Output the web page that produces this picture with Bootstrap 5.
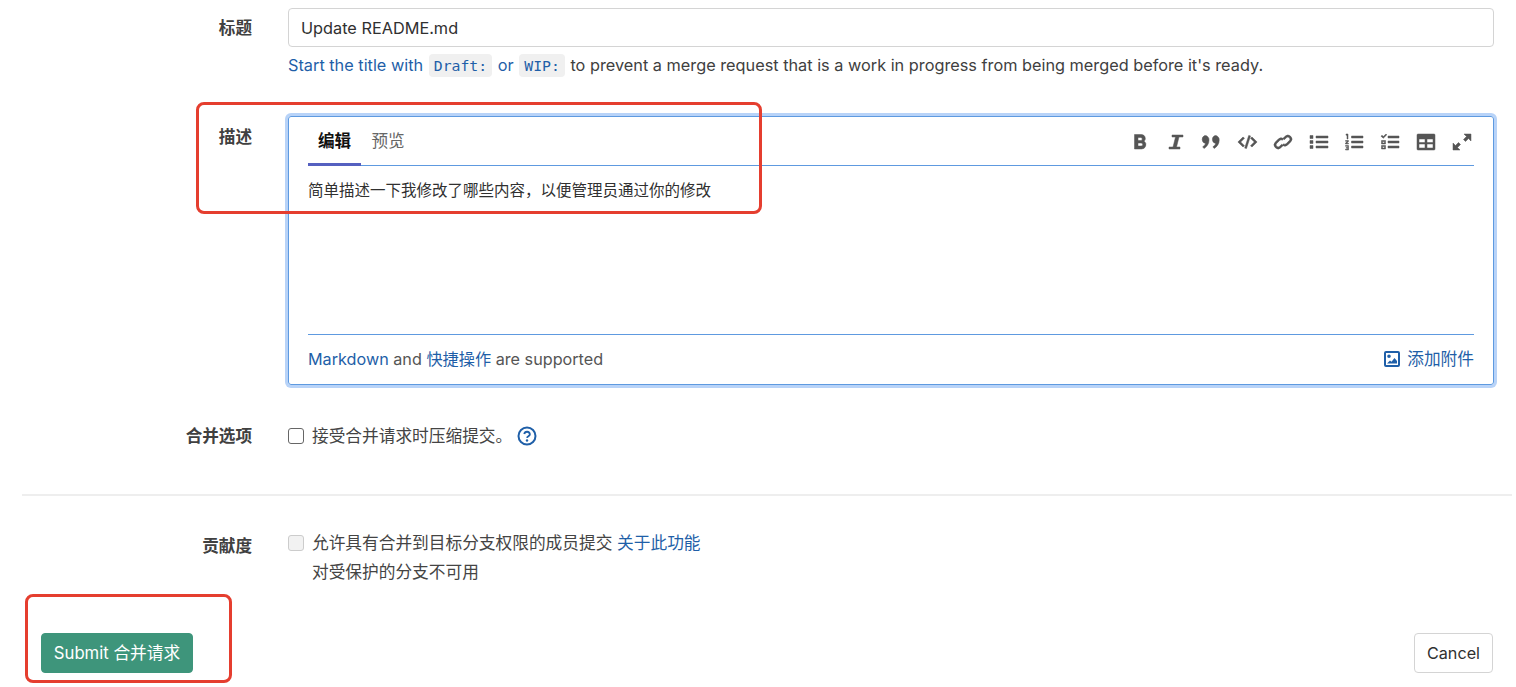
<!DOCTYPE html>
<html lang="zh">
<head>
<meta charset="utf-8">
<title>Merge request</title>
<link href="https://cdn.jsdelivr.net/npm/bootstrap@5.3.0/dist/css/bootstrap.min.css" rel="stylesheet">
<style>
html,body{height:687px;overflow:hidden}
body{background:#fff;color:#303030;font-family:Inter,"Noto Sans CJK SC",sans-serif;font-size:16.7px;position:relative}
.pg{padding:8px 4px 0 22px;height:687px;display:flex;flex-direction:column}
.frow{display:flex}
.flabel{width:230px;flex:none;text-align:right;font-weight:700;color:#404040;font-size:16.6px;line-height:24px}
.fbody{margin-left:36px;width:1206px;flex:none}
.lbl-title{margin-top:8px}
.title-in.form-control{height:39px;border:1px solid #d4d4d4;border-radius:4px;padding:0 12px;font-size:16.3px;color:#303030;font-family:inherit;box-shadow:none;line-height:37px}
.hint{margin-top:8px;line-height:20px;color:#404040;font-size:16.3px;white-space:nowrap}
.hint-link,.blue{color:#1f5fa8;text-decoration:none}
.hint code{font-family:"DejaVu Sans Mono",monospace;font-size:14.8px;color:#1f5fa8;background:#f0f0f0;border-radius:4px;padding:3px 5px;margin:0 1px}
.row-desc{margin-top:40px}
.lbl-desc{margin-top:9px}
.editor{height:269px;border:1px solid #5e9ae0;border-radius:3px;box-shadow:0 0 0 3px #b8d3f8;padding:0 19px;display:flex;flex-direction:column}
.edhead{height:49px;border-bottom:1px solid #5e9ae0;display:flex;justify-content:space-between;flex:none}
.edtab{width:53px;text-align:center;padding-top:12px;line-height:24px;height:49px;font-size:16.6px;color:#666;white-space:nowrap}
.edtab.on{font-weight:700;color:#111;border-bottom:3px solid #5560c0}
.edtab-next{margin-left:10px;width:34px}
.edtools{display:flex;gap:12px;padding:15px 0 0 0}
.edtools svg{width:24px;height:20px;fill:#555;stroke:#555;stroke-width:.5;display:block}
.edtext{flex:1;border-bottom:1px solid #5e9ae0;font-size:15.5px;color:#303030;padding-top:14px;line-height:22px}
.edfoot{height:49px;display:flex;justify-content:space-between;align-items:center;color:#555;font-size:16.2px;flex:none}
.attach{display:flex;align-items:center;gap:7px;font-size:16.7px}
.opt{line-height:24px;font-size:16.7px;color:#444}
.opt .form-check-input{width:16px;height:16px;margin:0 8px 0 0;border:1px solid #666;border-radius:3px;flex:none}
.opt .form-check-input:disabled{border-color:#ccc;background:#f2f2f2;opacity:1}
.row-merge{margin-top:39px}
.qmark{margin-left:5px}
.rule{margin:46px 0 0 0;border:0;border-top:2px solid #eeeeee;opacity:1}
.row-contrib{margin-top:35px}
.lbl-contrib{margin-top:3px}
.second{margin-left:24px;margin-top:5px}
.acts{display:flex;justify-content:space-between;margin-top:49px;padding:0 19px}
.btn-sub.btn{background:#3e957b;border-color:#3e957b;color:#fff;height:40px;width:152px;padding:2px 0 0;font-size:16.7px;border-radius:4px}
.btn-can.btn{background:#fff;border:1px solid #d4d4d4;color:#303030;height:40px;width:79px;padding:0;font-size:16.2px;border-radius:4px}
.callout{position:absolute;border:3px solid #e53e2f;border-radius:8px;pointer-events:none}
.c1{left:196px;top:102px;width:566px;height:112px}
.c2{left:25px;top:594px;width:207px;height:89px}
</style>
</head>
<body>
<div class="pg">
  <div class="frow">
    <div class="flabel lbl-title">标题</div>
    <div class="fbody">
      <input class="form-control title-in" value="Update README.md" aria-label="标题">
      <div class="hint"><a class="hint-link" href="#">Start the title with <code>Draft:</code> or <code>WIP:</code></a> to prevent a merge request that is a work in progress from being merged before it's ready.</div>
    </div>
  </div>
  <div class="frow row-desc">
    <div class="flabel lbl-desc">描述</div>
    <div class="fbody">
      <div class="editor">
        <div class="edhead">
          <div class="d-flex"><div class="edtab on">编辑</div><div class="edtab edtab-next">预览</div></div>
          <div class="edtools">
            <svg viewBox="0 0 24 20"><path d="M8.500 2.500h6.500a4 4 0 0 1 3.200 6.800A4.300 4.300 0 0 1 15.500 17H8.500zm3.500 3V8.500h2.800a1.500 1.500 0 0 0 0-3zm0 5.500v3h3.200a1.500 1.500 0 0 0 0-3z" fill-rule="evenodd"/></svg>
            <svg viewBox="0 0 24 20"><path d="M10 3h11v2h-4l-2.500 10H18v2H7v-2h4l2.500-10H10z"/></svg>
            <svg viewBox="0 0 24 20"><path d="M6.800 3.500a4.200 4.200 0 0 1 4.200 4.700c0 3.500-2 6.300-5 8.300l-1.300-1.700c1.500-1 2.400-2 2.800-3.300A4.200 4.200 0 0 1 6.800 3.500zm10.200 0a4.200 4.200 0 0 1 4.200 4.700c0 3.500-2 6.300-5 8.300l-1.300-1.700c1.500-1 2.400-2 2.800-3.300A4.200 4.200 0 0 1 17 3.500z"/></svg>
            <svg viewBox="0 0 24 20"><path d="M9 5l1.500 1.300L6.700 10l3.800 3.700L9 15l-5.100-5zM18 5l-1.500 1.300 3.800 3.700-3.800 3.700L18 15l5.100-5zM14.700 3.500l1.800.4-4 12.600-1.800-.4z"/></svg>
            <svg viewBox="0 0 24 20"><path d="M13 6.300l2-2a4 4 0 0 1 5.700 5.700l-3 3a4 4 0 0 1-5.400.2l1.300-1.400a2 2 0 0 0 2.700-.2l3-3a2 2 0 0 0-2.900-2.900l-2 2zM13 13.700l-2 2A4 4 0 0 1 5.300 10l3-3a4 4 0 0 1 5.400-.2l-1.300 1.400a2 2 0 0 0-2.700.2l-3 3a2 2 0 0 0 2.900 2.900l2-2z"/></svg>
            <svg viewBox="0 0 24 20"><path d="M4 3.500h3v3H4zM10 4h12v2H10zM4 8.500h3v3H4zM10 9h12v2H10zM4 13.500h3v3H4zM10 14h12v2H10z"/></svg>
            <svg viewBox="0 0 24 20"><path d="M4 2h2v5H5V3.200H4zM9.500 4H21v2H9.500zM9.500 9H21v2H9.500zM9.500 14H21v2H9.500zM3.500 8.500h3v1l-1.800 1.700h1.800v.8h-3v-1l1.800-1.700H3.500zM3.500 13.500h3v4.500h-3v-.8h2.200v-1H4.200v-.8h1.500v-1.100H3.500z"/></svg>
            <svg viewBox="0 0 24 20"><path d="M3 4.200l1-1 1.300 1.300L8 2l.8.8-3.500 3.400zM10 4h11v2H10zM3.500 8.500h4v3.500h-4zm1 1v1.500h2V9.500zM10 9h11v2H10zM3.500 13.500h4V17h-4zm1 1V16h2v-1.500zM10 14h11v2H10z" fill-rule="evenodd"/></svg>
            <svg viewBox="0 0 24 20"><path d="M4 2h16a1 1 0 0 1 1 1v14a1 1 0 0 1-1 1H4a1 1 0 0 1-1-1V3a1 1 0 0 1 1-1zm1 5v3.500h6V7zm8 0v3.500h6V7zM5 12v4h6v-4zm8 0v4h6v-4z" fill-rule="evenodd"/></svg>
            <svg viewBox="0 0 24 20"><path d="M14 2h7v7l-2.500-2.500-3 3-2-2 3-3zM3 18v-7l2.500 2.500 3-3 2 2-3 3L10 18z"/></svg>
          </div>
        </div>
        <div class="edtext">简单描述一下我修改了哪些内容，以便管理员通过你的修改</div>
        <div class="edfoot">
          <div><a class="blue" href="#">Markdown</a> and <a class="blue" href="#">快捷操作</a> are supported</div>
          <a class="blue attach" href="#"><svg width="16" height="16" viewBox="0 0 16 16"><path fill="#1f5fa8" fill-rule="evenodd" d="M2 0h12a2 2 0 0 1 2 2v12a2 2 0 0 1-2 2H2a2 2 0 0 1-2-2V2a2 2 0 0 1 2-2zm0 2v12h12V2zm3 1.500a1.800 1.800 0 1 1 0 3.600 1.800 1.800 0 0 1 0-3.600zM3 12.500l3-3 1.500 1.300L10.500 7 13 10v2.500z"/></svg>添加附件</a>
        </div>
      </div>
    </div>
  </div>
  <div class="frow row-merge">
    <div class="flabel">合并选项</div>
    <div class="fbody opt d-flex align-items-center">
      <input class="form-check-input" type="checkbox" aria-label="squash">
      <span>接受合并请求时压缩提交。</span>
      <svg class="qmark" width="20" height="20" viewBox="0 0 20 20"><circle cx="10" cy="10" r="8.500" fill="none" stroke="#1f5fa8" stroke-width="2"/><path d="M7.200 8a2.900 2.900 0 0 1 5.700.3c0 1.900-2.500 2-2.900 3.600" fill="none" stroke="#1f5fa8" stroke-width="1.800"/><circle cx="10" cy="14.500" r="1.200" fill="#1f5fa8"/></svg>
    </div>
  </div>
  <hr class="rule">
  <div class="frow row-contrib">
    <div class="flabel lbl-contrib">贡献度</div>
    <div class="fbody opt">
      <div class="d-flex align-items-center"><input class="form-check-input" type="checkbox" disabled aria-label="allow"><span>允许具有合并到目标分支权限的成员提交 <a class="blue" href="#">关于此功能</a></span></div>
      <div class="second">对受保护的分支不可用</div>
    </div>
  </div>
  <div class="acts">
    <button class="btn btn-sub" type="button">Submit 合并请求</button>
    <button class="btn btn-can" type="button">Cancel</button>
  </div>
</div>
<div class="callout c1"></div>
<div class="callout c2"></div>
</body>
</html>
